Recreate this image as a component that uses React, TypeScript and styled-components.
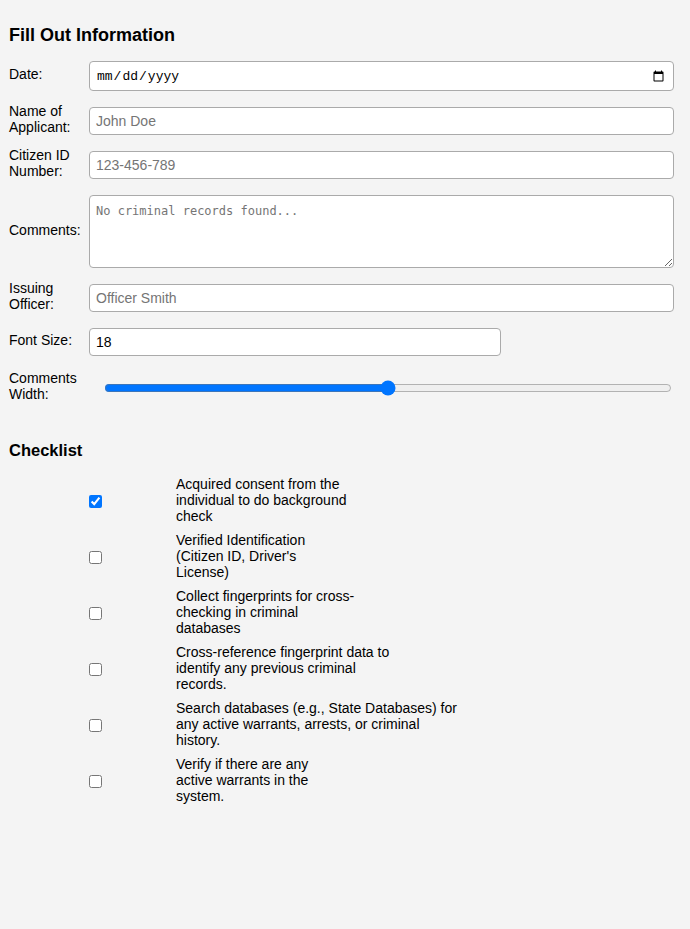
import { useState } from 'react';
import styled, { createGlobalStyle } from 'styled-components';

const GlobalStyle = createGlobalStyle`
  body {
    margin: 0;
    background-color: #f4f4f4;
    font-family: 'Liberation Sans', Arial, sans-serif;
    color: #000;
  }
`;

const Page = styled.div`
  padding: 24px 16px 40px 9px;
`;

const Heading = styled.h3<{ $size?: number }>`
  margin: 0 0 15px;
  font-size: ${(p) => p.$size ?? 18}px;
  line-height: 22px;
  font-weight: bold;
`;

const FormRow = styled.div<{ $minHeight?: number }>`
  display: flex;
  align-items: center;
  min-height: ${(p) => p.$minHeight ?? 0}px;
  margin-bottom: 16px;
`;

const Label = styled.label`
  width: 72px;
  margin: -4px 8px 0 0;
  flex-shrink: 0;
  font-size: 14px;
  line-height: 16px;
`;

const TextInput = styled.input<{ $width?: number }>`
  box-sizing: border-box;
  height: 28px;
  width: ${(p) => (p.$width ? `${p.$width}px` : '100%')};
  flex: ${(p) => (p.$width ? '0 0 auto' : '1')};
  padding: 0 6px;
  border: 1px solid #aaa;
  border-radius: 4px;
  background: #fff;
  font-family: 'Liberation Sans', Arial, sans-serif;
  font-size: 14px;
  color: #000;
  outline: none;

  &::placeholder {
    color: #757575;
  }
`;

const DateInput = styled.input`
  box-sizing: border-box;
  flex: 1;
  height: 30px;
  padding: 0 6px;
  border: 1px solid #aaa;
  border-radius: 4px;
  background: #fff;
  font-family: 'Liberation Mono', monospace;
  font-size: 13px;
  color: #000;
`;

const TextArea = styled.textarea`
  box-sizing: border-box;
  flex: 1;
  height: 73px;
  padding: 8px 6px;
  border: 1px solid #aaa;
  border-radius: 4px;
  background: #fff;
  font-family: 'DejaVu Sans Mono', monospace;
  font-size: 12px;
  outline: none;

  &::placeholder {
    color: #757575;
  }
`;

const Slider = styled.input`
  flex: 0 0 auto;
  width: 568px;
  margin: 0 0 0 15px;
  accent-color: #0075ff;
`;

const ChecklistHeading = styled(Heading)`
  margin-top: 35px;
`;

const CheckList = styled.div`
  display: flex;
  flex-direction: column;
  gap: 8px;
`;

const CheckRow = styled.div`
  display: flex;
  align-items: center;
  min-height: 48px;
`;

const CheckCell = styled.div`
  width: 167px;
  padding: 2px 0 0 80px;
  box-sizing: border-box;
  display: flex;
  align-items: center;
`;

const CheckBox = styled.input`
  width: 13px;
  height: 13px;
  margin: 0;
  accent-color: #0075ff;
`;

const CheckText = styled.div`
  font-size: 14px;
  line-height: 16px;
  white-space: nowrap;
`;

const checklist = [
  ['Acquired consent from the', 'individual to do background', 'check'],
  ['Verified Identification', '(Citizen ID, Driver\'s', 'License)'],
  ['Collect fingerprints for cross-', 'checking in criminal', 'databases'],
  ['Cross-reference fingerprint data to', 'identify any previous criminal', 'records.'],
  ['Search databases (e.g., State Databases) for', 'any active warrants, arrests, or criminal', 'history.'],
  ['Verify if there are any', 'active warrants in the', 'system.'],
];

const App = () => {
  const [fontSize, setFontSize] = useState('18');
  const [width, setWidth] = useState(50);
  const [checked, setChecked] = useState<boolean[]>([true, false, false, false, false, false]);

  const toggle = (i: number) => {
    setChecked((prev) => prev.map((c, idx) => (idx === i ? !c : c)));
  };

  return (
    <Page>
      <GlobalStyle />
      <Heading>Fill Out Information</Heading>

      <FormRow>
        <Label>Date:</Label>
        <DateInput type="date" />
      </FormRow>
      <FormRow>
        <Label>Name of Applicant:</Label>
        <TextInput type="text" placeholder="John Doe" />
      </FormRow>
      <FormRow>
        <Label>Citizen ID Number:</Label>
        <TextInput type="text" placeholder="123-456-789" />
      </FormRow>
      <FormRow>
        <Label>Comments:</Label>
        <TextArea placeholder="No criminal records found..." />
      </FormRow>
      <FormRow>
        <Label>Issuing Officer:</Label>
        <TextInput type="text" placeholder="Officer Smith" />
      </FormRow>
      <FormRow>
        <Label>Font Size:</Label>
        <TextInput
          type="number"
          $width={412}
          value={fontSize}
          onChange={(e) => setFontSize(e.target.value)}
        />
      </FormRow>
      <FormRow $minHeight={32}>
        <Label>Comments Width:</Label>
        <Slider
          type="range"
          min={0}
          max={100}
          value={width}
          onChange={(e) => setWidth(Number(e.target.value))}
        />
      </FormRow>

      <ChecklistHeading $size={16.5}>Checklist</ChecklistHeading>
      <CheckList>
        {checklist.map((lines, i) => (
          <CheckRow key={i}>
            <CheckCell>
              <CheckBox type="checkbox" checked={checked[i]} onChange={() => toggle(i)} />
            </CheckCell>
            <CheckText>
              {lines.map((line, j) => (
                <div key={j}>{line}</div>
              ))}
            </CheckText>
          </CheckRow>
        ))}
      </CheckList>
    </Page>
  );
};

export default App;
